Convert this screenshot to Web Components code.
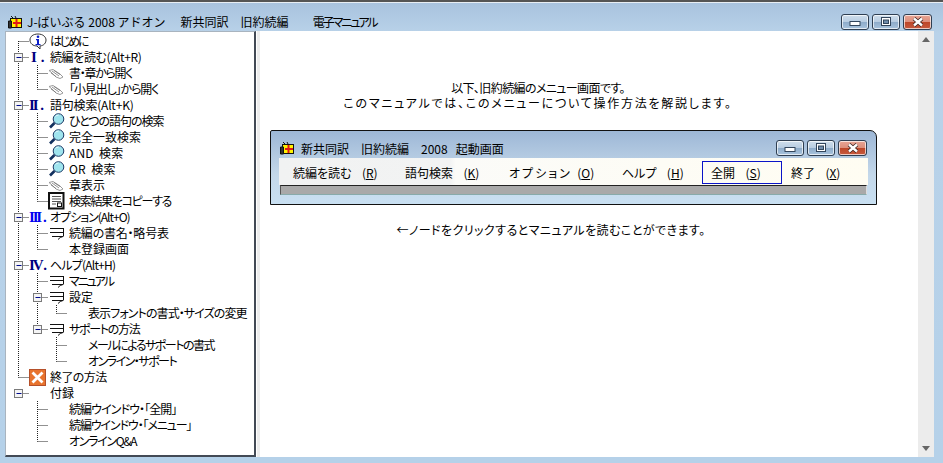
<!DOCTYPE html>
<html lang="ja">
<head>
<meta charset="utf-8">
<title>J-ばいぶる 2008 アドオン</title>
<style>
html, body { margin: 0; height: 100%; overflow: hidden; background: #b5d1e9; }
body { font: 12px "Noto Sans CJK JP", "Liberation Sans", sans-serif; color: #000; }
</style>
</head>
<body>
<help-window></help-window>
<script>
const ICONS = {
  app: `<svg width="15" height="14" viewBox="0 0 15 14"><rect x="2.500" y="3.500" width="11" height="9" fill="#fff200" stroke="#111"/><path d="M.5 6v7h3V6zM3 1l2 2M7 1l1 2" stroke="#111" fill="#333"/><path d="M8.500 4v8M5 8h8" stroke="#e01818" stroke-width="2"/></svg>`,
  info: `<svg width="18" height="17" viewBox="0 0 18 17"><path d="M9 1C4 1 1 3.500 1 7s3 6 7 6l3 3 0-3c4-.5 6-3 6-6S14 1 9 1z" fill="#fff" stroke="#333"/><circle cx="9" cy="3.800" r="1.300" fill="#0a1ec8"/><path d="M7 6h3v5h1.500v1.200h-5V11H8V7.200H7z" fill="#0a1ec8"/></svg>`,
  hand: `<svg width="17" height="11" viewBox="0 0 17 11"><path d="M1 2.500l4-1 7 4.500 3 3-3 1.500-4-1.500-4-4z" fill="#fff" stroke="#999"/><path d="M4 3l7 5M6 2.500l6 4M3 5l5 3.500" stroke="#777" stroke-width=".8" fill="none"/></svg>`,
  lens: `<svg width="17" height="16" viewBox="0 0 17 16"><circle cx="10.500" cy="6" r="5.300" fill="#9fe4ee" stroke="#1c3a66"/><path d="M7.500 3.500a3.500 3.500 0 0 1 3-1.500" stroke="#e8fbff" fill="none"/><path d="M6.500 10L2 14.500" stroke="#12305e" stroke-width="2.600"/></svg>`,
  list: `<svg width="17" height="14" viewBox="0 0 17 14"><path d="M2 2.500h14M2 6.500h14M15.500 2v8M4 10.500h11.500M15 10.500q-3 .5-5 3" stroke="#111" fill="none"/></svg>`,
  doc: `<svg width="17" height="18" viewBox="0 0 17 18"><rect x="1" y="1" width="14.500" height="15.500" fill="#fff" stroke="#111" stroke-width="2"/><path d="M4 4.500h9M4 7h9M4 9.500h9M4 12h4" stroke="#555"/><rect x="9.500" y="11" width="4" height="3.500" fill="#fff" stroke="#111"/></svg>`,
  close: `<svg width="17" height="17" viewBox="0 0 17 17"><rect x=".5" y=".5" width="16" height="16" fill="#e8742e" stroke="#b5502a"/><path d="M3.500 3.500l10 10M13.500 3.500l-10 10" stroke="#fff" stroke-width="2.800"/></svg>`
};

const boxTemplate = document.createElement('template');
boxTemplate.innerHTML = `
<style>
:host { display: inline-flex; align-items: center; justify-content: center; box-sizing: border-box; height: 16px;
  border: 1px solid #2f3f52; border-radius: 3px; box-shadow: inset 0 0 0 1px #ffffffb0;
  background: linear-gradient(#d0deec 0, #b8cde2 48%, #8dabc9 50%, #a9c4de 100%); }
:host([kind=close]) { background: linear-gradient(#e8a595 0, #dd8f7c 48%, #bd4628 50%, #c75a3e 100%); }
svg { display: block; }
</style>
<svg width="16" height="10" viewBox="0 0 16 10"></svg>`;

class WinButton extends HTMLElement {
  constructor() {
    super();
    this.attachShadow({ mode: 'open' });
    this.shadowRoot.appendChild(boxTemplate.content.cloneNode(true));
    const glyphs = {
      min: '<rect x="3" y="4.500" width="10" height="4" fill="#fff" stroke="#33465c"/>',
      max: '<rect x="3.500" y=".5" width="9" height="8" fill="#fff" stroke="#33465c"/><rect x="5.500" y="3" width="5" height="3.500" fill="#6f8cab" stroke="#33465c"/>',
      close: '<path d="M4 1.500l8 7M12 1.500l-8 7" stroke="#3a2320" stroke-width="4"/><path d="M4 1.500l8 7M12 1.500l-8 7" stroke="#fff" stroke-width="2.400"/>'
    };
    this.shadowRoot.querySelector('svg').innerHTML = glyphs[this.getAttribute('kind')];
  }
}
customElements.define('win-button', WinButton);

const captionTemplate = document.createElement('template');
captionTemplate.innerHTML = `
<style>
:host { display: flex; align-items: center; }
.icon { display: flex; }
.text { flex: 1; white-space: pre; padding-left: 4px; }
.btns { display: flex; gap: 3px; }
win-button { width: 28px; }
win-button[kind=close] { width: 29px; }
</style>
<span class="icon"></span>
<span class="text"><slot></slot></span>
<span class="btns">
  <win-button kind="min"></win-button>
  <win-button kind="max"></win-button>
  <win-button kind="close"></win-button>
</span>`;

class WinCaption extends HTMLElement {
  constructor() {
    super();
    this.attachShadow({ mode: 'open' });
    this.shadowRoot.appendChild(captionTemplate.content.cloneNode(true));
    this.shadowRoot.querySelector('.icon').innerHTML = ICONS.app;
  }
}
customElements.define('win-caption', WinCaption);

const rowTemplate = document.createElement('template');
rowTemplate.innerHTML = `
<style>
:host { display: flex; height: 16px; line-height: 16px; white-space: nowrap; }
svg.guides { flex: none; display: block; }
.icon { flex: none; width: 21px; height: 16px; display: flex; align-items: center; letter-spacing: 0; }
.icon svg { display: block; flex: none; }
.num { font: bold 15px/16px "Liberation Serif", serif; color: #00007f; letter-spacing: -2.200px; white-space: pre; }
.num.bright { color: #0000f0; }
.num b { letter-spacing: 0; }
.label { font-feature-settings: "palt"; white-space: pre; }
</style>
<svg class="guides" height="16"></svg>
<span class="icon"></span>
<span class="label"><slot></slot></span>`;

// roman numeral: left pad, gap before the dot
const NUMS = { I: [2, 6], II: [0, 4], III: [0, 3], IV: [0, 2] };

// dotted guide lines are worked out by help-tree and handed over as attributes
class TreeRow extends HTMLElement {
  constructor() {
    super();
    this.attachShadow({ mode: 'open' });
    this.shadowRoot.appendChild(rowTemplate.content.cloneNode(true));
  }
  connectedCallback() {
    const depth = +this.getAttribute('depth');
    const through = (this.getAttribute('through') || '').split(',').filter(Boolean).map(Number);
    const svg = this.shadowRoot.querySelector('.guides');
    const width = 23 + depth * 19;
    const lineX = (lvl) => 12.5 + lvl * 19;
    const dot = 'stroke="#222" stroke-dasharray="1 1" fill="none"';
    let out = '';
    through.forEach((lvl) => { out += `<path d="M${lineX(lvl)} 0V16" ${dot}/>`; });
    const own = lineX(depth);
    if (this.hasAttribute('elbow')) out += `<path d="M${own} 0V8.500" ${dot}/>`;
    if (this.hasAttribute('first')) out += `<path d="M${own} 8V16" ${dot}/>`;
    out += `<path d="M${own} 8.500H${width}" ${dot}/>`;
    if (this.hasAttribute('open')) {
      out += `<rect x="${own - 4}" y="4.500" width="8" height="8" fill="#f4f4f4" stroke="#7a7a7a"/>`;
      out += `<path d="M${own - 2} 8.500h5" stroke="#000a8c"/>`;
    }
    svg.setAttribute('width', width);
    svg.setAttribute('viewBox', `0 0 ${width} 16`);
    svg.innerHTML = out;

    const slot = this.shadowRoot.querySelector('.icon');
    const icon = this.getAttribute('icon');
    const num = this.getAttribute('num');
    if (icon) slot.innerHTML = ICONS[icon];
    if (num) {
      const [pad, gap] = NUMS[num];
      slot.innerHTML = `<span class="num${num === 'III' ? ' bright' : ''}" style="padding-left:${pad}px">${num}<b style="margin-left:${gap}px">.</b></span>`;
    }
  }
}
customElements.define('tree-row', TreeRow);

// ls = letter-spacing: MS P Gothic kana are much narrower than Noto's
const NODES = [
  { icon: 'info', text: 'はじめに', first: true, ls: -2.2 },
  { num: 'I', text: '続編を読む(Alt+R)', ls: -.4, kids: [
    { icon: 'hand', text: '書・章から開く', ls: -1.3 },
    { icon: 'hand', text: '「小見出し」から開く', ls: -1.1 }
  ] },
  { num: 'II', text: '語句検索(Alt+K)', ls: -.2, kids: [
    { icon: 'lens', text: 'ひとつの語句の検索', ls: -1 },
    { icon: 'lens', text: '完全一致検索' },
    { icon: 'lens', text: 'AND  検索', ls: .1 },
    { icon: 'lens', text: 'OR  検索', ls: .1 },
    { icon: 'hand', text: '章表示' },
    { icon: 'doc', text: '検索結果をコピーする', ls: -1.3 }
  ] },
  { num: 'III', text: 'オプション(Alt+O)', ls: -1, kids: [
    { icon: 'list', text: '続編の書名・略号表', ls: -.2 },
    { text: '本登録画面' }
  ] },
  { num: 'IV', text: 'ヘルプ(Alt+H)', ls: -.8, kids: [
    { icon: 'list', text: 'マニュアル', ls: -2 },
    { icon: 'list', text: '設定', kids: [{ text: '表示フォントの書式・サイズの変更', ls: -.9 }] },
    { icon: 'list', text: 'サポートの方法', ls: -1.3, kids: [
      { text: 'メールによるサポートの書式', ls: -1.5 },
      { text: 'オンライン・サポート', ls: -1.5 }
    ] }
  ] },
  { icon: 'close', text: '終了の方法', last: true, ls: -.6 },
  { text: '付録', detached: true, kids: [
    { text: '続編ウインドウ・「全開」', ls: -.9 },
    { text: '続編ウインドウ・「メニュー」', ls: -1.1 },
    { text: 'オンラインQ&A', ls: -1.3 }
  ] }
];

const treeTemplate = document.createElement('template');
treeTemplate.innerHTML = `
<style>
:host { display: block; box-sizing: border-box; width: 251px; background: #fff; overflow: hidden; padding-top: 1px;
  border: 1px solid #a9b4bf; border-right: 2px solid #434a55; border-bottom: 2px solid #434a55; }
</style>`;

class HelpTree extends HTMLElement {
  constructor() {
    super();
    this.attachShadow({ mode: 'open' });
    this.shadowRoot.appendChild(treeTemplate.content.cloneNode(true));
    this.addNodes(NODES, 0, []);
  }
  addNodes(list, depth, through) {
    list.forEach((node, i) => {
      const isLast = depth === 0 ? (node.last || node.detached) : i === list.length - 1;
      const row = document.createElement('tree-row');
      row.setAttribute('depth', depth);
      row.setAttribute('through', (isLast || node.first ? through : [...through, depth]).join(','));
      if (node.first) row.setAttribute('first', '');
      if (isLast && !node.detached) row.setAttribute('elbow', '');
      if (node.kids) row.setAttribute('open', '');
      if (node.icon) row.setAttribute('icon', node.icon);
      if (node.num) row.setAttribute('num', node.num);
      if (node.ls) row.style.letterSpacing = node.ls + 'px';
      row.textContent = node.text;
      this.shadowRoot.appendChild(row);
      if (node.kids) this.addNodes(node.kids, depth + 1, isLast ? through : [...through, depth]);
    });
  }
}
customElements.define('help-tree', HelpTree);

const itemTemplate = document.createElement('template');
itemTemplate.innerHTML = `
<style>
:host { display: block; font-feature-settings: "palt"; }
span { white-space: pre; }
.key { margin-left: var(--gap, 5px); }
u { text-underline-offset: 1px; }
</style>
<span><slot></slot>  <span class="key">(<u></u>)</span></span>`;

class MenuItem extends HTMLElement {
  constructor() {
    super();
    this.attachShadow({ mode: 'open' });
    this.shadowRoot.appendChild(itemTemplate.content.cloneNode(true));
    this.shadowRoot.querySelector('u').textContent = this.getAttribute('key');
  }
}
customElements.define('menu-item', MenuItem);

const miniTemplate = document.createElement('template');
miniTemplate.innerHTML = `
<style>
:host { display: flex; flex-direction: column; box-sizing: border-box; width: 607px; height: 75px; margin-left: 9px;
  border: 1px solid #111; border-radius: 2px 7px 0 0; padding: 9px 8px 8px;
  background: linear-gradient(#9db7d6, #c4d8ea 60%, #c9e0f2); }
win-caption { height: 16px; margin: 0 1px 2px 1px; }
.t1 { margin-left: 2px; }
.t2 { margin-left: 8px; }
.menu { box-sizing: border-box; height: 27px; display: flex; align-items: center; padding: 1px 0 0 14px;
  background: linear-gradient(90deg, #f1f2f2 0, #f2f3f3 29%, #fbfbf8 30%, #fffdf2 100%); }
menu-item { flex: none; }
.focus { box-sizing: border-box; width: 80px; height: 23px; border: 1px solid #0a14c8; line-height: 21px; padding-left: 8px; }
.wide { letter-spacing: 2px; }
.bar { height: 10px; margin: 0 1px; box-sizing: border-box; background: #a9a9a9; border-top: 1px solid #222; border-left: 1px solid #555; border-right: 1px solid #ddd; border-bottom: 1px solid #8aa; }
</style>
<win-caption><span class="t1">新共同訳　旧約続編　2008</span><span class="t2">起動画面</span></win-caption>
<div class="menu">
  <menu-item key="R" style="width:112px">続編を読む</menu-item>
  <menu-item key="K" style="width:104px">語句検索</menu-item>
  <menu-item key="O" style="width:113px;--gap:0px"><span class="wide">オプション</span></menu-item>
  <menu-item key="H" style="width:80px">ヘルプ</menu-item>
  <menu-item key="S" class="focus">全開</menu-item>
  <menu-item key="X" style="margin-left:9px">終了</menu-item>
</div>
<div class="bar"></div>`;

class MiniWindow extends HTMLElement {
  constructor() {
    super();
    this.attachShadow({ mode: 'open' });
    this.shadowRoot.appendChild(miniTemplate.content.cloneNode(true));
  }
}
customElements.define('mini-window', MiniWindow);

const scrollTemplate = document.createElement('template');
scrollTemplate.innerHTML = `
<style>
:host { display: flex; flex: none; flex-direction: column; justify-content: space-between; align-items: center; width: 16px; background: #ececec; padding: 6px 0; box-sizing: border-box; }
i { width: 0; height: 0; border: 4px solid transparent; border-top: 0; border-bottom: 5px solid #666; }
i + i { border-bottom: 0; border-top: 5px solid #666; }
</style>
<i></i><i></i>`;

class ScrollTrack extends HTMLElement {
  constructor() {
    super();
    this.attachShadow({ mode: 'open' });
    this.shadowRoot.appendChild(scrollTemplate.content.cloneNode(true));
  }
}
customElements.define('scroll-track', ScrollTrack);

const pageTemplate = document.createElement('template');
pageTemplate.innerHTML = `
<style>
:host { display: flex; flex-direction: column; height: 463px; box-sizing: border-box; border-top: 2px solid #555;
  background: linear-gradient(#a8c2de 0, #b9d2e9 32px, #b5d1e9 100%); }
.top { box-shadow: inset 0 1px 0 #e8eef4; height: 29px; padding: 10px 11px 0 8px; box-sizing: border-box; }
.top .doc { margin-left: 24px; letter-spacing: -2px; font-feature-settings: "palt"; }
.top .a { margin-left: 15px; }
.body { flex: 1; display: flex; margin: 0 9px 6px 5px; min-height: 0; }
.split { flex: none; width: 5px; background: linear-gradient(90deg, #fff 0 1px, #ededed 1px 4px, #fff 4px); }
.pane { flex: 1; min-width: 0; background: #fff; line-height: 15px; font-feature-settings: "palt"; }
.wrap { flex: 1; display: flex; background: #fff; min-width: 0; }
.note { width: 554px; text-align: center; padding-top: 49px; height: 50px; }
.note div:first-child { letter-spacing: -.600px; }
.note div + div { letter-spacing: 1.740px; white-space: nowrap; }
.hint { width: 580px; text-align: center; margin-top: 17px; letter-spacing: .460px; }
</style>
<win-caption class="top">J-ばいぶる 2008 アドオン<span class="a">新共同訳　旧約続編</span><span class="doc">電子マニュアル</span></win-caption>
<div class="body">
  <help-tree></help-tree>
  <div class="split"></div>
  <div class="wrap">
    <div class="pane">
      <div class="note"><div>以下、旧約続編のメニュー画面です。</div><div>このマニュアルでは、このメニューについて操作方法を解説します。</div></div>
      <mini-window></mini-window>
      <div class="hint">←ノードをクリックするとマニュアルを読むことができます。</div>
    </div>
    <scroll-track></scroll-track>
  </div>
</div>`;

class HelpWindow extends HTMLElement {
  constructor() {
    super();
    this.attachShadow({ mode: 'open' });
    this.shadowRoot.appendChild(pageTemplate.content.cloneNode(true));
  }
}
customElements.define('help-window', HelpWindow);
</script>
</body>
</html>
